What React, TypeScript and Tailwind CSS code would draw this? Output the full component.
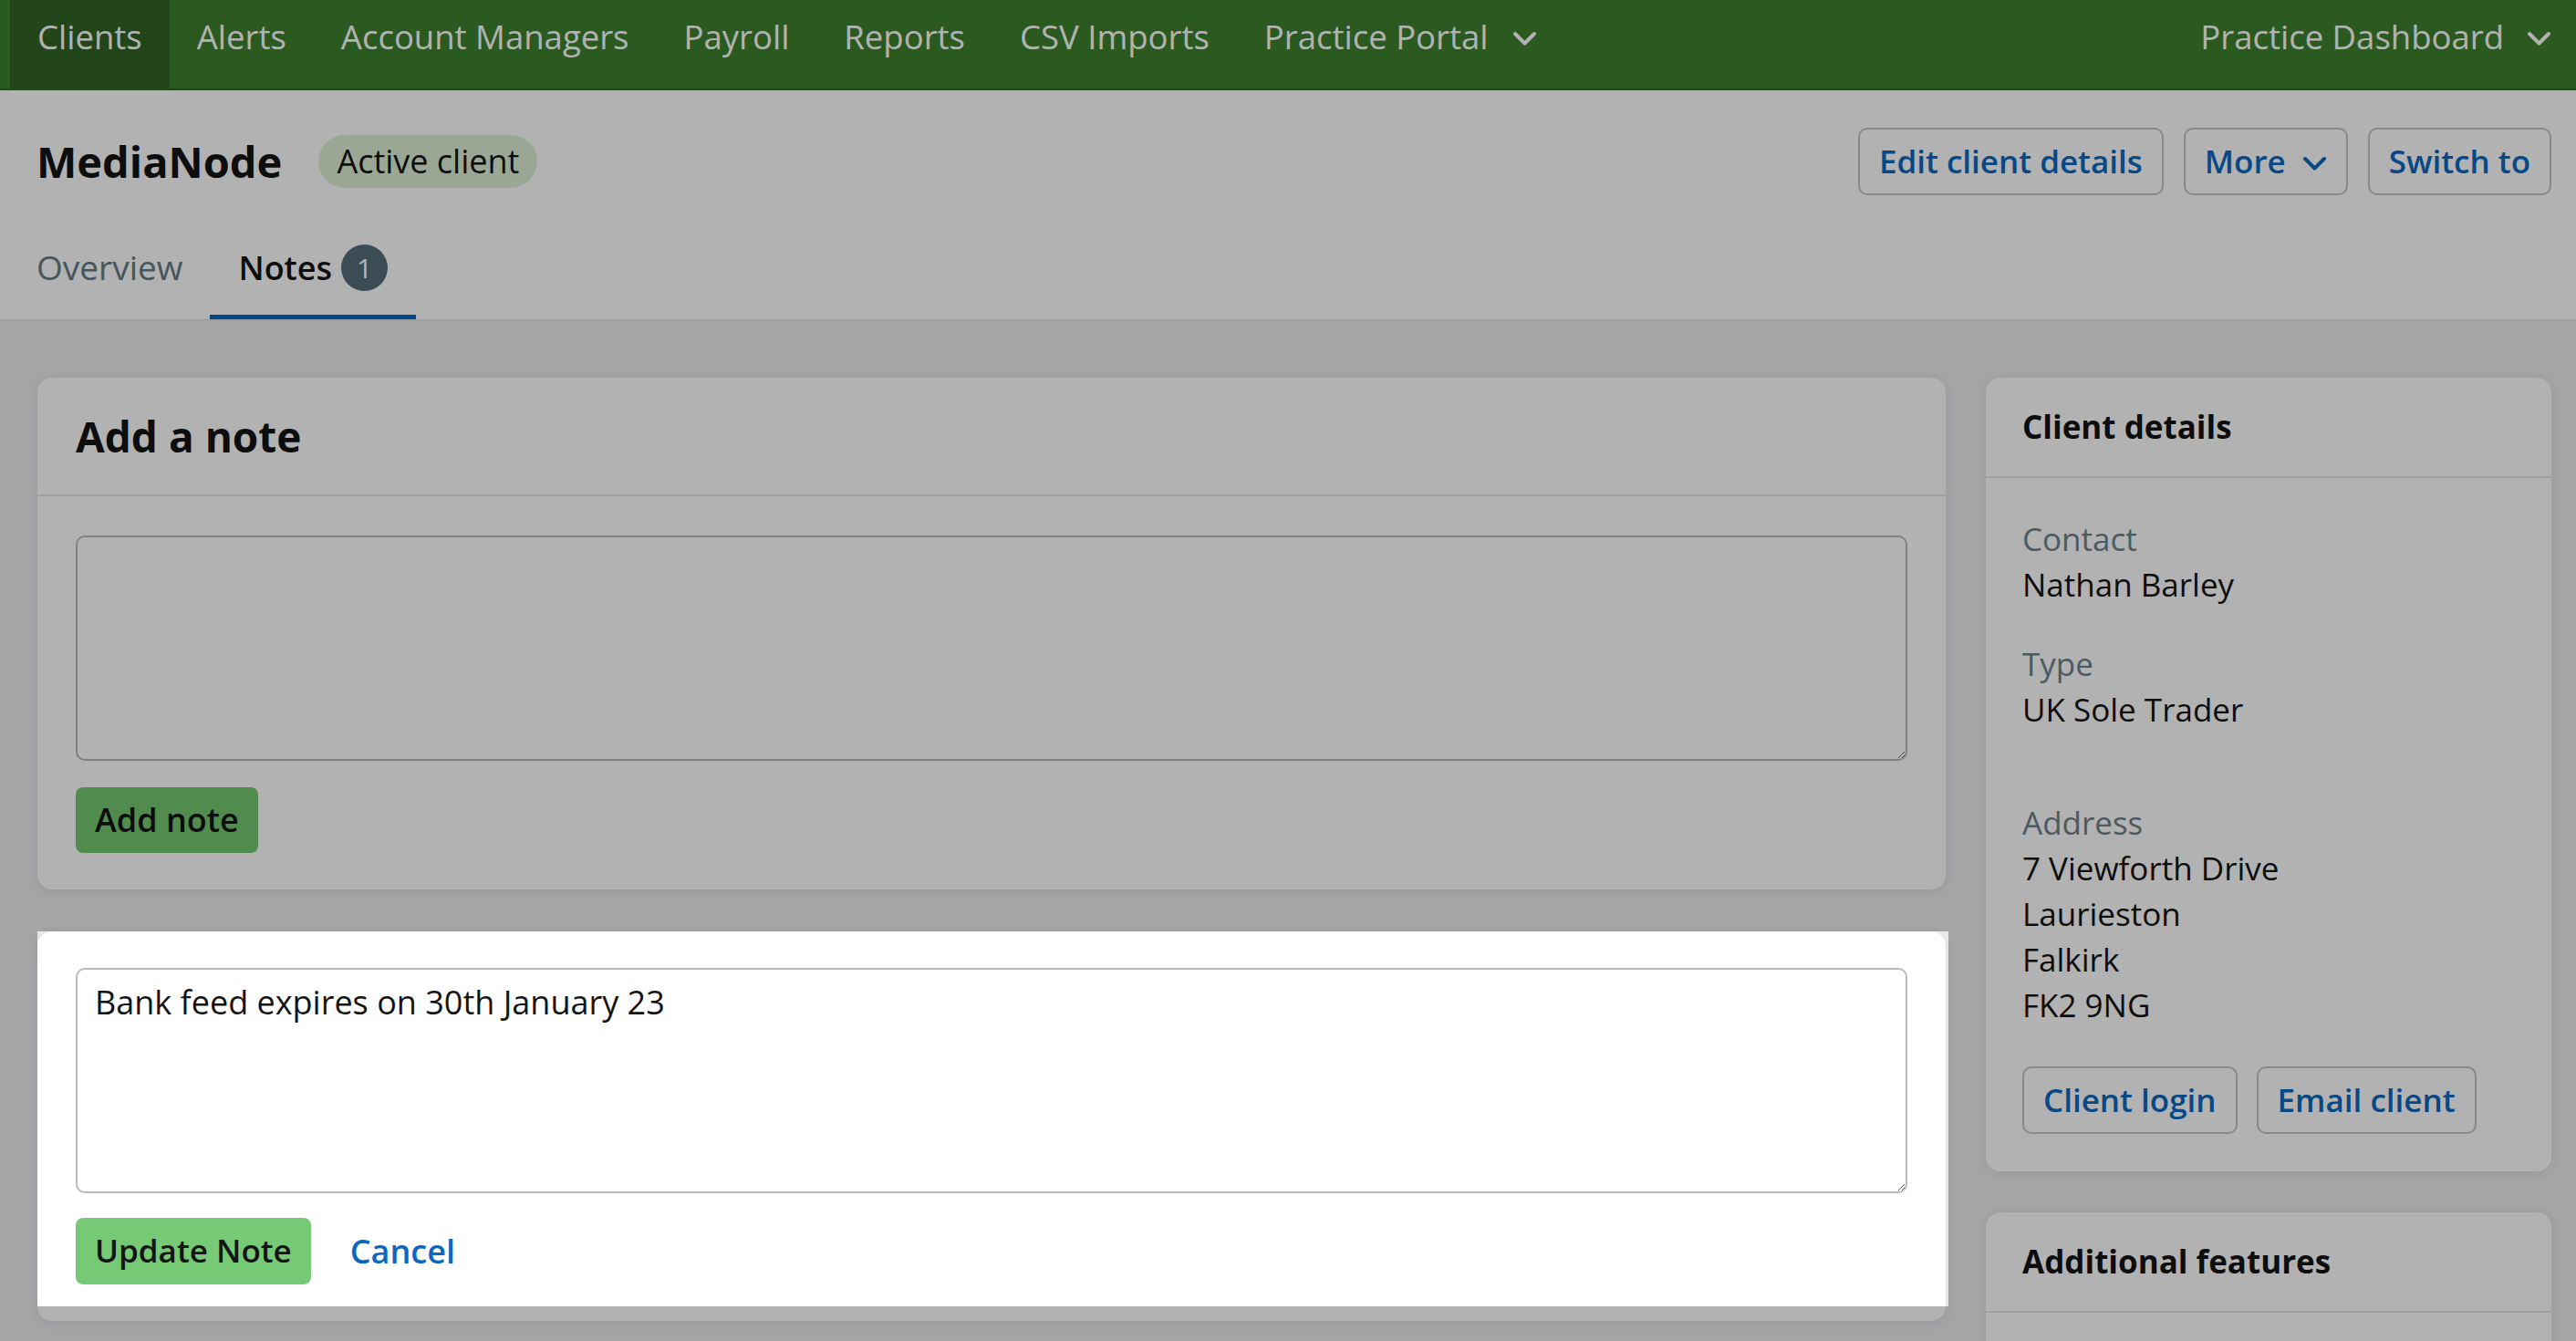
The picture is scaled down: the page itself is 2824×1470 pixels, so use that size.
const NAV = ["Clients", "Alerts", "Account Managers", "Payroll", "Reports", "CSV Imports"];

function Chevron({ className = "" }: { className?: string }) {
  return (
    <svg viewBox="0 0 27 17" className={`h-[17px] w-[27px] ${className}`} fill="none">
      <polyline points="3,3 13.5,13.5 24,3" stroke="currentColor" strokeWidth="4" strokeLinecap="round" strokeLinejoin="round" />
    </svg>
  );
}

function OutlineButton({ children }: { children: React.ReactNode }) {
  return (
    <button
      type="button"
      className="flex h-[74px] items-center gap-[18px] rounded-[10px] border-2 border-[#c0c5cb] bg-white px-[21px] text-[35px] font-semibold text-[#0b67c2]"
    >
      {children}
    </button>
  );
}

function Field({ label, lines, className = "" }: { label: string; lines: string[]; className?: string }) {
  return (
    <div className={className}>
      <div className="text-[#6d828d]">{label}</div>
      {lines.map((l) => (
        <div key={l}>{l}</div>
      ))}
    </div>
  );
}

export default function App() {
  return (
    <div className="h-screen overflow-hidden bg-[#eaecef] font-['Open_Sans','Lato',sans-serif] text-[#141414]">
      {/* top nav */}
      <nav className="flex h-[99px] justify-between border-b-2 border-[#2c6a22] bg-[#3d822e] pl-[11px] pr-[27px] text-[36.5px] leading-[44px] text-white">
        <div className="flex">
          {NAV.map((n, i) => (
            <div key={n} className={`px-[30px] pt-[18px] ${i === 0 ? "bg-[#316425]" : ""}`}>
              {n}
            </div>
          ))}
          <div className="flex items-start gap-[26px] px-[30px] pt-[18px]">
            Practice Portal
            <Chevron className="mt-[16px]" />
          </div>
        </div>
        <div className="flex items-start gap-[25px] pt-[18px]">
          Practice Dashboard
          <Chevron className="mt-[16px]" />
        </div>
      </nav>

      {/* client header */}
      <header className="border-b-2 border-[#dee5ea] bg-white">
        <div className="flex items-center justify-between pl-[40px] pr-[27px] pt-[41px]">
          <div className="flex items-center gap-[40px]">
            <h1 className="text-[47px] font-bold leading-none">MediaNode</h1>
            <span className="flex h-[58px] items-center rounded-full bg-[#dff0d6] px-[20px] text-[36px]">
              Active client
            </span>
          </div>
          <div className="flex gap-[22px]">
            <OutlineButton>Edit client details</OutlineButton>
            <OutlineButton>
              More
              <Chevron className="mt-[4px]" />
            </OutlineButton>
            <OutlineButton>Switch to</OutlineButton>
          </div>
        </div>
        <div className="mt-[37px] flex pl-[10px] text-[36px] leading-[44px]">
          <div className="border-b-[5px] border-transparent px-[30px] pb-[29px] pt-[20px] text-[37px] text-[#657b88]">
            Overview
          </div>
          <div className="flex items-center gap-[10px] border-b-[5px] border-[#0566c5] px-[31px] pb-[29px] pt-[20px] font-semibold">
            Notes
            <span className="-my-[3px] flex h-[51px] w-[51px] items-center justify-center rounded-full bg-[#576d79] text-[30px] font-normal text-white">
              1
            </span>
          </div>
        </div>
      </header>

      <main className="flex gap-[44px] pl-[41px] pr-[27px] pt-[62px]">
        {/* notes column */}
        <div className="flex flex-1 flex-col gap-[46px]">
          <section className="rounded-[16px] bg-white shadow-[0_2px_14px_rgba(0,0,0,0.07)]">
            <div className="flex h-[130px] items-center border-b-2 border-[#e4e6ea] px-[42px]">
              <h2 className="text-[46px] font-bold">Add a note</h2>
            </div>
            <div className="px-[42px] pb-[40px] pt-[43px]">
              <textarea className="block h-[247px] w-full rounded-[10px] border-2 border-[#b3bbc1] bg-white px-[19px] py-[16px] text-[36px] outline-none" />
              <button
                type="button"
                className="mt-[29px] h-[72px] rounded-[8px] bg-[#74c970] px-[21px] text-[36px] font-semibold"
              >
                Add note
              </button>
            </div>
          </section>

          <section className="relative rounded-[16px] bg-white px-[42px] pb-[40px] pt-[40px] shadow-[0_2px_14px_rgba(0,0,0,0.07)]">
            <textarea
              className="block h-[247px] w-full rounded-[10px] border-2 border-[#b3bbc1] bg-white px-[19px] py-[14px] text-[36px] leading-[44px] outline-none"
              defaultValue="Bank feed expires on 30th January 23"
            />
            <div className="mt-[27px] flex items-center gap-[43px]">
              <button
                type="button"
                className="h-[73px] rounded-[8px] bg-[#77ca75] px-[21px] text-[35px] font-semibold"
              >
                Update Note
              </button>
              <span className="text-[36px] font-semibold text-[#0b67c2]">Cancel</span>
            </div>
            {/* tour spotlight */}
            <div className="pointer-events-none absolute -right-[3px] bottom-[16px] left-0 top-0 z-50 shadow-[0_0_0_5000px_rgba(0,0,0,0.3)]" />
          </section>
        </div>

        {/* sidebar */}
        <aside className="flex w-[620px] flex-col gap-[45px]">
          <section className="rounded-[16px] bg-white shadow-[0_2px_14px_rgba(0,0,0,0.07)]">
            <div className="flex h-[110px] items-center border-b-2 border-[#e4e6ea] px-[40px]">
              <h3 className="text-[35px] font-bold">Client details</h3>
            </div>
            <div className="px-[40px] pb-[41px] pt-[42px] text-[35px] leading-[50px]">
              <Field label="Contact" lines={["Nathan Barley"]} />
              <Field label="Type" lines={["UK Sole Trader"]} className="mt-[37px]" />
              <Field
                label="Address"
                lines={["7 Viewforth Drive", "Laurieston", "Falkirk", "FK2 9NG"]}
                className="mt-[74px]"
              />
              <div className="mt-[42px] flex gap-[21px] leading-normal">
                <OutlineButton>Client login</OutlineButton>
                <OutlineButton>Email client</OutlineButton>
              </div>
            </div>
          </section>

          <section className="rounded-[16px] bg-white shadow-[0_2px_14px_rgba(0,0,0,0.07)]">
            <div className="flex h-[110px] items-center border-b-2 border-[#e4e6ea] px-[40px]">
              <h3 className="text-[35px] font-bold">Additional features</h3>
            </div>
            <div className="h-[240px]" />
          </section>
        </aside>
      </main>
    </div>
  );
}
